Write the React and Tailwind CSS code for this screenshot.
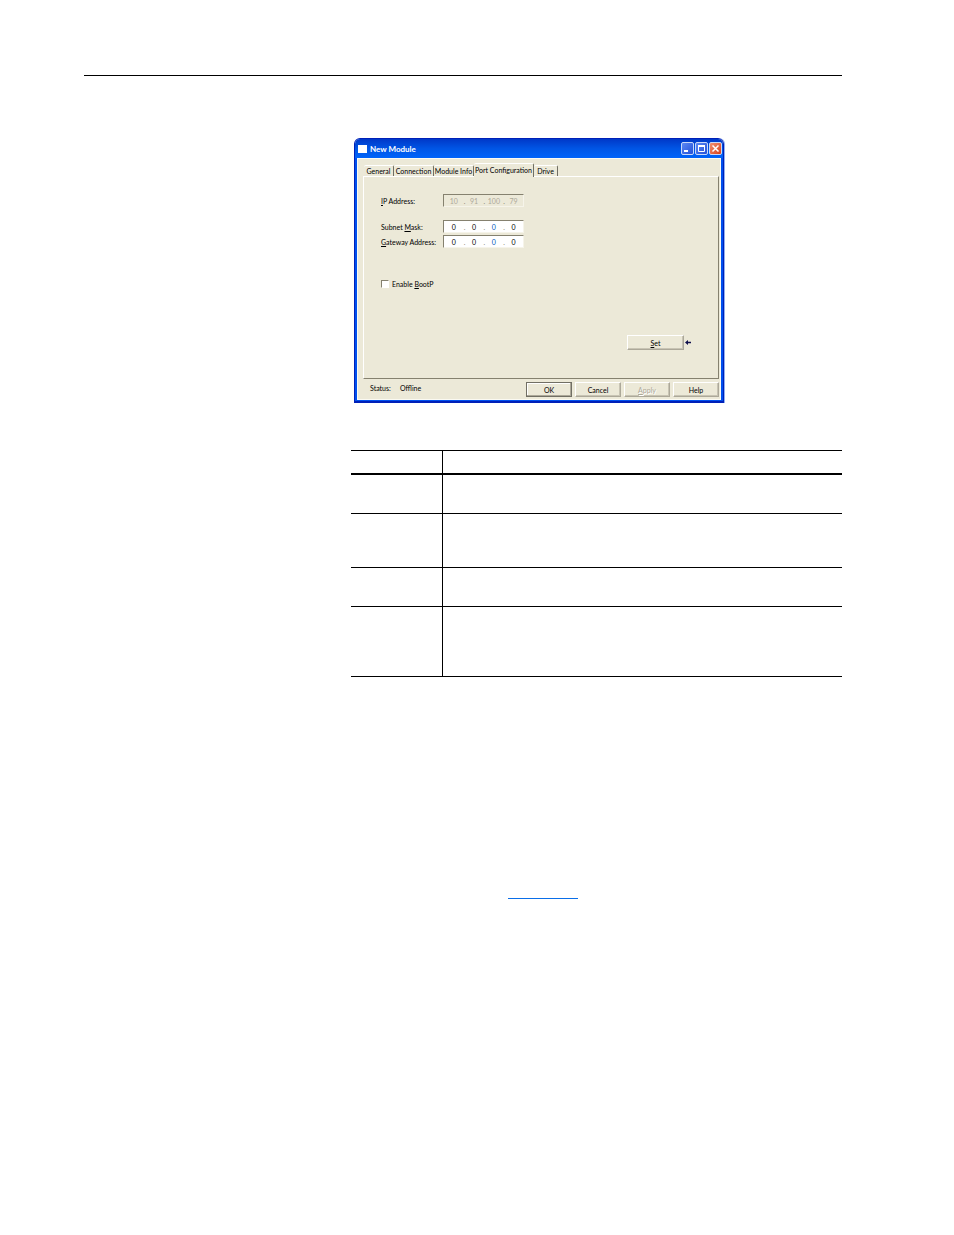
import { useState } from "react";

const TABS = [
  { id: "general", label: "General", width: "w-[30px]" },
  { id: "connection", label: "Connection", width: "w-10" },
  { id: "module", label: "Module Info", width: "w-10" },
  { id: "port", label: "Port Configuration", width: "w-[60px]" },
  { id: "drive", label: "Drive", width: "w-6" },
];

const ROW_HEIGHTS = ["h-[39px]", "h-[54px]", "h-[39px]", "h-[70px]"];

function TitleButton({ label, red = false, children }) {
  return (
    <button
      type="button"
      aria-label={label}
      className={`flex h-[13px] w-[13px] items-center justify-center rounded-xs border border-[#c8d8f8] ${
        red
          ? "bg-linear-to-br from-[#f09070] to-[#d83c10]"
          : "bg-linear-to-br from-[#5c88f4] to-[#2450d8]"
      }`}
    >
      {children}
    </button>
  );
}

function TitleBar() {
  return (
    <div className="flex h-[19px] items-center bg-linear-to-b from-[#0038c8] via-[#0055e5] to-[#0064fa] pr-px pl-[3px]">
      <span className="h-2 w-[9px] bg-white" />
      <h1 className="ml-[3px] flex-1 font-['Lato'] text-[8px] leading-3 font-bold text-white">
        New Module
      </h1>
      <div className="flex gap-px">
        <TitleButton label="Minimize">
          <svg viewBox="0 0 11 11" className="h-[11px] w-[11px]">
            <path d="M2 8h4" stroke="#fff" strokeWidth="2" />
          </svg>
        </TitleButton>
        <TitleButton label="Maximize">
          <svg viewBox="0 0 11 11" className="h-[11px] w-[11px]" fill="none">
            <path d="M2.500 3v5.500h6V3" stroke="#fff" />
            <path d="M2 3h7" stroke="#fff" strokeWidth="2" />
          </svg>
        </TitleButton>
        <TitleButton label="Close" red>
          <svg viewBox="0 0 11 11" className="h-[11px] w-[11px]">
            <path d="M2.500 2.500l6 6M8.500 2.500l-6 6" stroke="#fff" strokeWidth="1.500" />
          </svg>
        </TitleButton>
      </div>
    </div>
  );
}

// Four-part address box, one small input per octet
function AddressInput({ id, value, disabled = false }) {
  const [octets, setOctets] = useState(value);

  const handleChange = (idx, next) => {
    setOctets(octets.map((octet, i) => (i === idx ? next : octet)));
  };

  return (
    <div
      className={`flex h-[13px] w-[81px] items-center border border-t-[#85816f] border-r-[#f6f4ea] border-b-[#f6f4ea] border-l-[#85816f] ${
        disabled ? "text-[#aca899]" : "bg-white text-black"
      }`}
    >
      {octets.map((octet, idx) => (
        <div key={idx} className="flex min-w-0 flex-1 items-center">
          {idx > 0 && <span className="w-px text-[#85816f]">.</span>}
          <input
            id={idx === 0 ? id : undefined}
            aria-labelledby={`${id}-label`}
            value={octet}
            disabled={disabled}
            onChange={(e) => handleChange(idx, e.target.value)}
            className={`h-[11px] w-full min-w-0 text-center ${
              idx === 2 && !disabled ? "text-[#0058b8]" : ""
            }`}
          />
        </div>
      ))}
    </div>
  );
}

function AddressRow({ id, value, disabled, children }) {
  return (
    <div className="flex items-center">
      <label id={`${id}-label`} htmlFor={id} className="w-[62px] whitespace-nowrap">
        {children}
      </label>
      <AddressInput id={id} value={value} disabled={disabled} />
    </div>
  );
}

function PushButton({ children, isDefault = false, disabled = false, width = "w-[46px]" }) {
  return (
    <button
      type="button"
      disabled={disabled}
      className={`h-[15px] border ${width} ${
        isDefault
          ? "border-[#716f64] shadow-[inset_-1px_-1px_0_#aca899,inset_1px_1px_0_#fff]"
          : "border-t-white border-r-[#aca899] border-b-[#aca899] border-l-white shadow-[inset_-1px_-1px_0_#c8c4b4]"
      } ${disabled ? "text-[#aca899] [text-shadow:1px_1px_0_#fff]" : ""}`}
    >
      {children}
    </button>
  );
}

function ModuleDialog() {
  const [tab, setTab] = useState("port");
  const [bootp, setBootp] = useState(false);

  return (
    <section className="w-[371px] rounded-t-md border-r border-[#8fb0f4] font-['Lato','Liberation_Sans',sans-serif] text-[7px] leading-[10px] text-black">
      <div className="overflow-hidden rounded-t-md border border-b-2 border-[#0020b8]">
        <TitleBar />
        <div className="border-x-2 border-b border-[#0050ee] bg-[#ece9d8]">
          <div className="border border-[#fbfaf2] pt-1 pr-px pb-0.5 pl-[5px]">
            {/* Tab strip */}
            <div role="tablist" className="flex items-end pl-px">
              {TABS.map((t) => {
                const active = t.id === tab;
                return (
                  <button
                    key={t.id}
                    type="button"
                    role="tab"
                    aria-selected={active}
                    onClick={() => setTab(t.id)}
                    className={`rounded-t-xs border-t border-r border-t-white border-r-[#716f64] whitespace-nowrap ${t.width} ${
                      active ? "relative -mb-px h-[14px] bg-[#ece9d8] pb-0.5" : "h-[11px]"
                    }`}
                  >
                    {t.label}
                  </button>
                );
              })}
            </div>

            {/* Port configuration page */}
            <div
              role="tabpanel"
              className="border border-t-white border-r-[#85816f] border-b-[#85816f] border-l-white pt-[17px] pr-[27px] pb-7 pl-[17px]"
            >
              <AddressRow id="ip" value={["10", "91", "100", "79"]} disabled>
                <u>I</u>P Address:
              </AddressRow>
              <div className="mt-[13px] flex flex-col gap-0.5">
                <AddressRow id="subnet" value={["0", "0", "0", "0"]}>
                  Subnet <u>M</u>ask:
                </AddressRow>
                <AddressRow id="gateway" value={["0", "0", "0", "0"]}>
                  <u>G</u>ateway Address:
                </AddressRow>
              </div>
              <label className="mt-[31px] flex items-center gap-[3px]">
                <input
                  type="checkbox"
                  checked={bootp}
                  onChange={(e) => setBootp(e.target.checked)}
                  className="h-2 w-2 appearance-none border border-t-[#85816f] border-r-white border-b-white border-l-[#85816f] bg-white checked:bg-[#0040a0]"
                />
                <span>
                  Enable <u>B</u>ootP
                </span>
              </label>
              <div className="mt-[46px] flex items-center justify-end gap-px">
                <PushButton width="w-[57px]">
                  <u>S</u>et
                </PushButton>
                <svg viewBox="0 0 6 5" className="h-[5px] w-[6px]">
                  <path d="M0 2.500L3 0v1.700h3v1.600H3V5z" fill="#10104c" />
                </svg>
              </div>
            </div>

            {/* Status line and dialog buttons */}
            <div className="mt-[3px] flex items-center">
              <p className="flex flex-1 pb-1 pl-[7px]">
                <span className="w-[30px]">Status:</span>
                <span>Offline</span>
              </p>
              <div className="flex gap-[3px]">
                <PushButton isDefault>OK</PushButton>
                <PushButton>Cancel</PushButton>
                <PushButton disabled>
                  <u>A</u>pply
                </PushButton>
                <PushButton>Help</PushButton>
              </div>
            </div>
          </div>
        </div>
      </div>
    </section>
  );
}

function SettingsTable() {
  return (
    <table className="w-full table-fixed border-separate border-spacing-0 border-t border-black">
      <colgroup>
        <col className="w-[91px]" />
        <col />
      </colgroup>
      <thead>
        <tr className="h-6">
          <th className="border-b-2 border-black" />
          <th className="border-b-2 border-l border-black" />
        </tr>
      </thead>
      <tbody>
        {ROW_HEIGHTS.map((height, idx) => (
          <tr key={idx} className={height}>
            <td className="border-b border-black" />
            <td className="border-b border-l border-black" />
          </tr>
        ))}
      </tbody>
    </table>
  );
}

export default function App() {
  return (
    <main className="min-h-screen bg-white pr-28 pl-[84px]">
      <header className="h-[76px] border-b border-black" />
      <div className="pt-[62px] pl-[270px]">
        <ModuleDialog />
      </div>
      <div className="pt-[47px] pl-[267px]">
        <SettingsTable />
      </div>
      <p className="flex pt-[206px] pl-[424px]">
        <a href="#" className="h-4 w-[70px] border-b border-[#0a6ee8]" />
      </p>
    </main>
  );
}
